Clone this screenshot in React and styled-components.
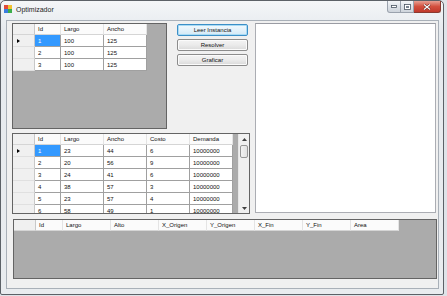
import React from "react";
import styled, { createGlobalStyle } from "styled-components";

const Global = createGlobalStyle`
  html, body { margin: 0; padding: 0; background: #dfe3e8; }
  body { font-family: "Liberation Sans", Arial, sans-serif; }
  #root { width: 447px; height: 296px; overflow: hidden; }
`;

const Window = styled.div`
  box-sizing: border-box;
  width: 444px;
  height: 295px;
  border: 1px solid #5c6167;
  border-radius: 5px 5px 2px 2px;
  background: linear-gradient(#f4f6f8, #e6eaee 30px, #e9ecef);
  display: flex;
  flex-direction: column;
`;

const TitleBar = styled.div`
  height: 19px;
  display: flex;
  align-items: flex-start;
  padding-left: 3px;
`;

const TitleText = styled.span`
  font-family: "Liberation Sans", Arial, sans-serif;
  font-size: 7px;
  color: #1e1e1e;
  margin-top: 5px;
  margin-left: 4px;
`;

const AppIcon = styled.svg`
  margin-top: 4px;
  flex: none;
`;

const Caption = styled.div`
  margin-left: auto;
  margin-right: 2px;
  display: flex;
  height: 12px;
`;

const CapBtn = styled.div`
  box-sizing: border-box;
  width: ${(p) => p.$w}px;
  height: 12px;
  border: 1px solid ${(p) => (p.$close ? "#8a3a30" : "#9aa2ad")};
  border-top: none;
  border-left: ${(p) => (p.$first ? "1px solid #9aa2ad" : "none")};
  border-radius: ${(p) => p.$radius};
  background: ${(p) =>
    p.$close
      ? "linear-gradient(#e8a093, #d3503e 50%, #c0392b)"
      : "linear-gradient(#f4f6f8, #dde2e8 50%, #cfd5dc)"};
  display: flex;
  align-items: center;
  justify-content: center;
`;

const Client = styled.div`
  flex: 1;
  margin: 0 4px 5px 5px;
  border: 1px solid #a9b0b8;
  background: #f0f0f0;
  padding: 2px 0 0 5px;
  display: flex;
  flex-direction: column;
`;

const TopArea = styled.div`
  display: flex;
  align-items: flex-start;
`;

const LeftArea = styled.div`
  display: flex;
  flex-direction: column;
  gap: 4px;
  width: 238px;
`;

const TopRow = styled.div`
  display: flex;
  align-items: flex-start;
`;

const Buttons = styled.div`
  display: flex;
  flex-direction: column;
  gap: 3px;
  margin-left: 10px;
  margin-top: 1px;
`;

const Button = styled.div`
  box-sizing: border-box;
  width: 71px;
  height: 12px;
  border: 1px solid ${(p) => (p.$focus ? "#3c8fc7" : "#8c8c8c")};
  border-radius: 2px;
  background: ${(p) =>
    p.$focus
      ? "linear-gradient(#f2f9fd, #e3f1fa 50%, #d3e9f6)"
      : "linear-gradient(#f3f3f3, #ebebeb 50%, #d9d9d9)"};
  box-shadow: inset 0 0 0 1px ${(p) => (p.$focus ? "#a8dbf5" : "#fbfbfb")};
  font-size: 6px;
  color: #111;
  display: flex;
  align-items: center;
  justify-content: center;
`;

const Panel = styled.div`
  box-sizing: border-box;
  width: 181px;
  height: 190px;
  margin-left: 5px;
  background: #fff;
  border: 1px solid #abadb3;
  border-top-color: #9a9ca3;
`;

const GridBox = styled.div`
  box-sizing: border-box;
  width: ${(p) => p.$w}px;
  height: ${(p) => p.$h}px;
  margin-top: ${(p) => p.$mt || 0}px;
  margin-left: ${(p) => p.$ml || 0}px;
  border: 1px solid #646464;
  background: #ababab;
  display: flex;
  overflow: hidden;
`;

const GridBody = styled.div`
  flex: 1;
  display: flex;
  flex-direction: column;
`;

const Row = styled.div`
  display: flex;
  height: ${(p) => p.$h}px;
  flex: none;
`;

const Cell = styled.div`
  box-sizing: border-box;
  width: ${(p) => p.$w}px;
  flex: none;
  border-right: 1px solid ${(p) => (p.$head ? "#e4e4e4" : "#a0a0a0")};
  border-bottom: 1px solid ${(p) => (p.$head ? "#d5d5d5" : "#a0a0a0")};
  background: ${(p) => (p.$sel ? "#3399ff" : p.$head ? "#fbfbfb" : "#fff")};
  color: ${(p) => (p.$sel ? "#fff" : "#111")};
  font-size: 6px;
  padding-left: 3px;
  display: flex;
  align-items: center;
  white-space: nowrap;
  overflow: hidden;
`;

const RowHead = styled.div`
  box-sizing: border-box;
  width: 22px;
  flex: none;
  background: #f0f0f0;
  border-right: 1px solid #c8c8c8;
  border-bottom: 1px solid ${(p) => (p.$top ? "#d5d5d5" : "#e0e0e0")};
  display: flex;
  align-items: center;
  padding-left: 4px;
`;

const Arrow = styled.div`
  width: 0;
  height: 0;
  border-top: 2.5px solid transparent;
  border-bottom: 2.5px solid transparent;
  border-left: 3px solid #000;
`;

const ScrollBar = styled.div`
  box-sizing: border-box;
  width: 11px;
  margin-left: auto;
  background: #f0f0f0;
  border-left: 1px solid #e6e6e6;
  display: flex;
  flex-direction: column;
  align-items: center;
`;

const ScrollArrow = styled.div`
  height: 10px;
  display: flex;
  align-items: center;
  justify-content: center;
`;

const Thumb = styled.div`
  box-sizing: border-box;
  width: 8px;
  height: 13px;
  margin-top: 1px;
  border: 1px solid #979797;
  border-radius: 2px;
  background: linear-gradient(90deg, #f3f3f3, #e2e2e2);
`;

const ScrollSpacer = styled.div`
  flex: 1;
`;

const Tri = ({ up }) => (
  <svg width="5" height="3" viewBox="0 0 5 3">
    <path d={up ? "M2.5 0 L5 3 L0 3 Z" : "M0 0 L5 0 L2.5 3 Z"} fill="#404040" />
  </svg>
);

function Grid({ w, h, mt, ml, cols, headers, rows, headH, rowH, scroll }) {
  return (
    <GridBox $w={w} $h={h} $mt={mt} $ml={ml}>
      <GridBody>
        <Row $h={headH}>
          <RowHead $top />
          {headers.map((t, i) => (
            <Cell key={i} $w={cols[i]} $head>
              {t}
            </Cell>
          ))}
        </Row>
        {rows.map((r, ri) => (
          <Row key={ri} $h={rowH}>
            <RowHead>{ri === 0 && <Arrow />}</RowHead>
            {r.map((v, ci) => (
              <Cell key={ci} $w={cols[ci]} $sel={ri === 0 && ci === 0}>
                {v}
              </Cell>
            ))}
          </Row>
        ))}
      </GridBody>
      {scroll && (
        <ScrollBar>
          <ScrollArrow>
            <Tri up />
          </ScrollArrow>
          <Thumb />
          <ScrollSpacer />
          <ScrollArrow>
            <Tri />
          </ScrollArrow>
        </ScrollBar>
      )}
    </GridBox>
  );
}

const grid1Rows = [
  ["1", "100", "125"],
  ["2", "100", "125"],
  ["3", "100", "125"],
];

const grid2Rows = [
  ["1", "23", "44", "6", "10000000"],
  ["2", "20", "56", "9", "10000000"],
  ["3", "24", "41", "6", "10000000"],
  ["4", "38", "57", "3", "10000000"],
  ["5", "23", "57", "4", "10000000"],
  ["6", "58", "49", "1", "10000000"],
];

export default function App() {
  return (
    <>
      <Global />
      <Window>
        <TitleBar>
          <AppIcon width="8" height="8" viewBox="0 0 8 8">
            <rect x="0" y="0" width="4" height="4" fill="#e04a3a" />
            <rect x="4" y="0" width="4" height="4" fill="#f2c230" />
            <rect x="0" y="4" width="4" height="4" fill="#3a7de0" />
            <rect x="4" y="4" width="4" height="4" fill="#3cae4a" />
          </AppIcon>
          <TitleText>Optimizador</TitleText>
          <Caption>
            <CapBtn $w={14} $first $radius="0 0 0 3px">
              <svg width="6" height="3" viewBox="0 0 6 3">
                <rect x="0.5" y="0.5" width="5" height="2" fill="#fff" stroke="#4a5562" strokeWidth="0.8" />
              </svg>
            </CapBtn>
            <CapBtn $w={13} $radius="0">
              <svg width="7" height="6" viewBox="0 0 7 6">
                <rect x="0.5" y="0.5" width="6" height="5" fill="#fff" stroke="#4a5562" strokeWidth="0.8" />
                <rect x="2" y="2" width="3" height="2" fill="#7a8592" />
              </svg>
            </CapBtn>
            <CapBtn $w={27} $close $radius="0 0 3px 0">
              <svg width="8" height="6" viewBox="0 0 8 6">
                <path d="M1 0.5 L7 5.5 M7 0.5 L1 5.5" stroke="#5a1f18" strokeWidth="2.2" />
                <path d="M1 0.5 L7 5.5 M7 0.5 L1 5.5" stroke="#fff" strokeWidth="1.2" />
              </svg>
            </CapBtn>
          </Caption>
        </TitleBar>
        <Client>
          <TopArea>
            <LeftArea>
              <TopRow>
                <Grid
                  w={155}
                  h={106}
                  cols={[26, 43, 43]}
                  headers={["Id", "Largo", "Ancho"]}
                  rows={grid1Rows}
                  headH={11}
                  rowH={12}
                />
                <Buttons>
                  <Button $focus>Leer Instancia</Button>
                  <Button>Resolver</Button>
                  <Button>Graficar</Button>
                </Buttons>
              </TopRow>
              <Grid
                w={238}
                h={81}
                cols={[26, 43, 43, 43, 43]}
                headers={["Id", "Largo", "Ancho", "Costo", "Demanda"]}
                rows={grid2Rows}
                headH={11}
                rowH={12}
                scroll
              />
            </LeftArea>
            <Panel />
          </TopArea>
          <Grid
            w={424}
            h={60}
            mt={5}
            ml={1}
            cols={[27, 48, 48, 48, 48, 48, 48, 48]}
            headers={["Id", "Largo", "Alto", "X_Origen", "Y_Origen", "X_Fin", "Y_Fin", "Area"]}
            rows={[]}
            headH={11}
            rowH={12}
          />
        </Client>
      </Window>
    </>
  );
}
